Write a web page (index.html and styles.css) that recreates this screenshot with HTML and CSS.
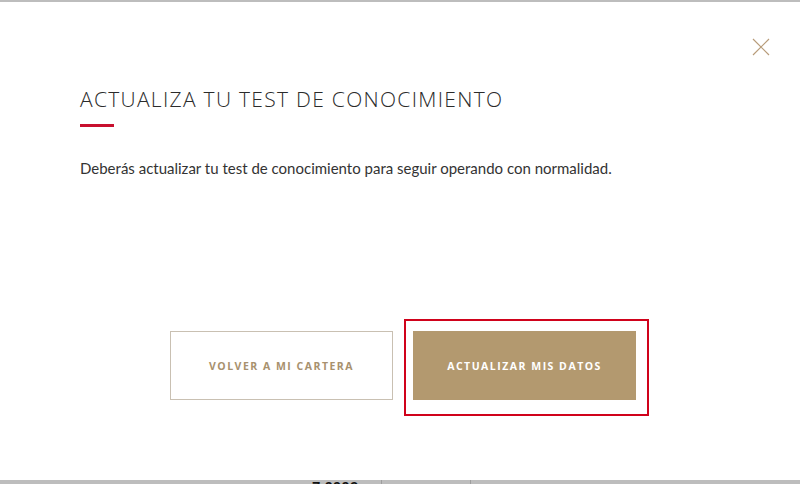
FILE: index.html
```html
<!DOCTYPE html>
<html lang="es">
<head>
<meta charset="utf-8">
<link rel="stylesheet" href="styles.css">
</head>
<body>
<div class="topbar"></div>
<div class="modal">
  <div class="close-row">
    <button class="close" aria-label="Cerrar">
      <svg width="18" height="18" viewBox="0 0 18 18"><path d="M1 1 L17 17 M17 1 L1 17" stroke="#b89c7a" stroke-width="1.2" fill="none"/></svg>
    </button>
  </div>
  <h1 class="title">ACTUALIZA TU TEST DE CONOCIMIENTO</h1>
  <div class="rule"></div>
  <p class="text">Deberás actualizar tu test de conocimiento para seguir operando con normalidad.</p>
  <div class="actions">
    <button class="btn btn-outline">VOLVER A MI CARTERA</button>
    <span class="highlight"><button class="btn btn-solid">ACTUALIZAR MIS DATOS</button></span>
  </div>
</div>
<div class="under">
  <div class="cell c1"></div>
  <div class="cell c2"><span>7.000€</span></div>
  <div class="cell c3"></div>
  <div class="cell c4"></div>
</div>
</body>
</html>
```
FILE: styles.css
```css
html, body {
  margin: 0;
  padding: 0;
  background: #ffffff;
}
body {
  width: 800px;
  height: 484px;
  overflow: hidden;
  font-family: "Open Sans", "Liberation Sans", sans-serif;
  color: #333333;
}
.topbar {
  height: 2px;
  background: #bdbdbd;
}
.modal {
  height: 478px;
  box-sizing: border-box;
  padding: 0 0 0 80px;
  display: flex;
  flex-direction: column;
}
.close-row {
  display: flex;
  justify-content: flex-end;
  padding: 36px 30px 0 0;
  height: 18px;
}
.close {
  border: 0;
  background: transparent;
  padding: 0;
  width: 18px;
  height: 18px;
  cursor: pointer;
}
.close svg { display: block; }
.title {
  margin: 30px 0 0 0;
  font-size: 21px;
  font-weight: 300;
  letter-spacing: 1.3px;
  line-height: 26px;
  color: #2b2b2b;
}
.rule {
  width: 34px;
  height: 3px;
  background: #c8102e;
  margin-top: 12px;
}
.text {
  margin: 31px 0 0 0;
  font-family: "Lato", "Open Sans", sans-serif;
  font-size: 15px;
  line-height: 20px;
  color: #333333;
}
.actions {
  margin: 153px 0 0 90px;
  display: flex;
  gap: 20px;
}
.btn {
  width: 223px;
  height: 69px;
  box-sizing: border-box;
  font-family: "Open Sans", "Liberation Sans", sans-serif;
  font-size: 10.5px;
  font-weight: 700;
  letter-spacing: 1.5px;
  cursor: pointer;
}
.btn-outline {
  background: #ffffff;
  border: 1px solid #c9c0b2;
  color: #a8916e;
}
.btn-solid {
  background: #b3996f;
  border: 0;
  color: #ffffff;
}
.highlight {
  position: relative;
  display: block;
}
.highlight::after {
  content: "";
  position: absolute;
  top: -12px;
  left: -9px;
  right: -13px;
  bottom: -16px;
  border: 2px solid #d0021b;
  pointer-events: none;
}
.under {
  height: 4px;
  background: #bdbdbd;
  display: flex;
  overflow: hidden;
}
.cell {
  height: 4px;
  position: relative;
}
.c1 { width: 300px; }
.c2 { width: 81px; }
.c3 { width: 88px; border-left: 1px solid #9e9e9e; border-right: 1px solid #9e9e9e; }
.c4 { flex: 1; }
.c2 span {
  position: absolute;
  left: 12px;
  top: -1px;
  font-family: "Liberation Sans", sans-serif;
  font-size: 15px;
  font-weight: 700;
  color: #111111;
  line-height: 15px;
}
```
